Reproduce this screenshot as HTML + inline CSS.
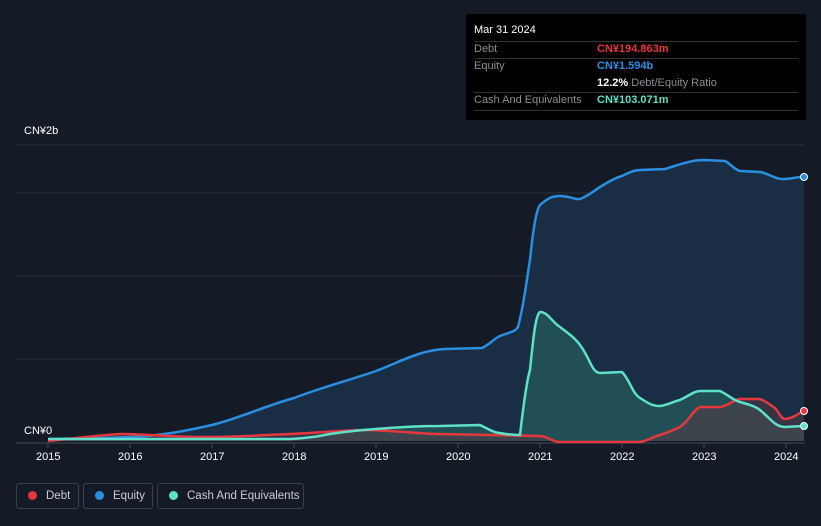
<!DOCTYPE html><html><head><style>
body{margin:0;background:#151b26;width:821px;height:526px;overflow:hidden;font-family:"Liberation Sans",sans-serif;position:relative}
.tt{position:absolute;left:466px;top:14px;width:340px;height:106px;background:#000;color:#fff;font-size:11px}
.r{position:absolute;left:8px;right:8px;border-top:1px solid #333}
.l{position:absolute;left:8px;color:#8a8f96}.v{position:absolute;left:131px;font-weight:bold}
.ax{position:absolute;color:#fff;font-size:11px}
.lg{position:absolute;top:483px;height:26px;border:1px solid #3a404a;border-radius:3px;color:#c8ccd2;font-size:11.5px;line-height:24px;box-sizing:border-box;white-space:nowrap}
.lg i{display:inline-block;width:9px;height:9px;border-radius:50%;margin:0 9px 0 11px;vertical-align:-1px}
</style></head><body>
<div class="tt">
<div style="position:absolute;left:8px;top:10px">Mar 31 2024</div>
<div class="r" style="top:27px"></div>
<div class="l" style="top:29px">Debt</div><div class="v" style="top:29px;color:#e5383e">CN¥194.863m</div>
<div class="r" style="top:44px"></div>
<div class="l" style="top:46px">Equity</div><div class="v" style="top:46px;color:#2a8fe0">CN¥1.594b</div>
<div class="v" style="top:63px">12.2% <span style="color:#8a8f96;font-weight:normal">Debt/Equity Ratio</span></div>
<div class="r" style="top:78px"></div>
<div class="l" style="top:80px">Cash And Equivalents</div><div class="v" style="top:80px;color:#5fe0c8">CN¥103.071m</div>
<div class="r" style="top:96px"></div>
</div>
<svg width="821" height="526" style="position:absolute;left:0;top:0">
<g stroke="#262d39" stroke-width="1"><line x1="16" y1="145" x2="805" y2="145"/><line x1="16" y1="193" x2="805" y2="193"/><line x1="16" y1="276" x2="805" y2="276"/><line x1="16" y1="359" x2="805" y2="359"/></g>
<line x1="16" y1="443" x2="805" y2="443" stroke="#444b56"/>
<path d="M48,439 C90,438 110,438 130,437 C160,436 185,431 212,425 C240,418 265,406 294,398 C320,388 350,380 376,371 C400,362 420,350 445,349 L482,348 C490,344 495,338 500,336 C510,332 515,332 518,327 C525,300 528,270 530,260 C533,230 536,210 540,205 C548,198 552,196 560,196 C570,196 575,200 580,199 C590,195 595,190 600,187 C610,181 615,178 622,176 C630,172 635,170 640,170 L665,169 C675,166 680,164 685,163 C695,160 700,160 705,160 L725,161 C732,165 735,170 740,171 L760,172 C770,174 775,179 782,179 C792,179 795,177 804,177 L804,441 L48,441Z" fill="#1b3550" fill-opacity=".75"/>
<path d="M48,439 L290,439 C310,438 320,436 330,434 C350,431 360,430 376,429 C400,427 420,426 440,426 L480,425 C490,430 495,433 500,433 C510,435 515,435 520,435 C524,400 527,380 530,370 C534,330 536,315 540,312 C548,312 552,322 560,327 C568,333 575,338 580,345 C590,358 592,373 600,373 L622,372 C630,380 632,393 640,398 C648,403 652,406 660,406 C668,405 672,402 680,400 C690,395 695,391 700,391 L720,391 C730,396 733,400 740,402 C750,405 755,406 760,410 C770,418 775,427 785,427 L804,426 L804,441 L48,441Z" fill="#2a6a62" fill-opacity=".55"/>
<path d="M48,441 C80,438 100,435 120,434 C150,434 170,437 200,437 C240,437 260,435 290,434 C320,433 340,430 370,430 C400,431 420,434 440,434 L540,436 C550,437 552,442 560,442 L640,442 C650,440 652,437 660,435 C670,432 673,430 680,427 C690,420 693,410 700,407 L720,407 C730,405 733,400 740,399 L760,399 C768,402 770,405 775,408 C779,412 781,419 785,419 C795,418 798,413 804,411 L804,441 L48,441Z" fill="#5a3a44" fill-opacity=".5"/>
<path d="M48,439 C90,438 110,438 130,437 C160,436 185,431 212,425 C240,418 265,406 294,398 C320,388 350,380 376,371 C400,362 420,350 445,349 L482,348 C490,344 495,338 500,336 C510,332 515,332 518,327 C525,300 528,270 530,260 C533,230 536,210 540,205 C548,198 552,196 560,196 C570,196 575,200 580,199 C590,195 595,190 600,187 C610,181 615,178 622,176 C630,172 635,170 640,170 L665,169 C675,166 680,164 685,163 C695,160 700,160 705,160 L725,161 C732,165 735,170 740,171 L760,172 C770,174 775,179 782,179 C792,179 795,177 804,177" fill="none" stroke="#2a8fe0" stroke-width="2.5"/>
<path d="M48,441 C80,438 100,435 120,434 C150,434 170,437 200,437 C240,437 260,435 290,434 C320,433 340,430 370,430 C400,431 420,434 440,434 L540,436 C550,437 552,442 560,442 L640,442 C650,440 652,437 660,435 C670,432 673,430 680,427 C690,420 693,410 700,407 L720,407 C730,405 733,400 740,399 L760,399 C768,402 770,405 775,408 C779,412 781,419 785,419 C795,418 798,413 804,411" fill="none" stroke="#e5383e" stroke-width="2.5"/>
<path d="M48,439 L290,439 C310,438 320,436 330,434 C350,431 360,430 376,429 C400,427 420,426 440,426 L480,425 C490,430 495,433 500,433 C510,435 515,435 520,435 C524,400 527,380 530,370 C534,330 536,315 540,312 C548,312 552,322 560,327 C568,333 575,338 580,345 C590,358 592,373 600,373 L622,372 C630,380 632,393 640,398 C648,403 652,406 660,406 C668,405 672,402 680,400 C690,395 695,391 700,391 L720,391 C730,396 733,400 740,402 C750,405 755,406 760,410 C770,418 775,427 785,427 L804,426" fill="none" stroke="#5fe0c8" stroke-width="2.5"/>
<circle cx="804" cy="177" r="3.5" fill="#2a8fe0" stroke="#fff"/><circle cx="804" cy="411" r="3.5" fill="#e5383e" stroke="#fff"/><circle cx="804" cy="426" r="3.5" fill="#5fe0c8" stroke="#fff"/>
<g stroke="#444b56"><line x1="48" y1="443" x2="48" y2="448"/><line x1="130" y1="443" x2="130" y2="448"/><line x1="212" y1="443" x2="212" y2="448"/><line x1="294" y1="443" x2="294" y2="448"/><line x1="376" y1="443" x2="376" y2="448"/><line x1="458" y1="443" x2="458" y2="448"/><line x1="540" y1="443" x2="540" y2="448"/><line x1="622" y1="443" x2="622" y2="448"/><line x1="704" y1="443" x2="704" y2="448"/><line x1="786" y1="443" x2="786" y2="448"/></g>
</svg>
<div class="ax" style="left:24px;top:125px">CN¥2b</div>
<div class="ax" style="left:24px;top:425px">CN¥0</div>
<div class="ax" style="left:36px;top:451px">2015</div><div class="ax" style="left:118px;top:451px">2016</div><div class="ax" style="left:200px;top:451px">2017</div><div class="ax" style="left:282px;top:451px">2018</div><div class="ax" style="left:364px;top:451px">2019</div><div class="ax" style="left:446px;top:451px">2020</div><div class="ax" style="left:528px;top:451px">2021</div><div class="ax" style="left:610px;top:451px">2022</div><div class="ax" style="left:692px;top:451px">2023</div><div class="ax" style="left:774px;top:451px">2024</div>
<div class="lg" style="left:16px;width:63px"><i style="background:#e5383e"></i>Debt</div>
<div class="lg" style="left:83px;width:70px"><i style="background:#2a8fe0"></i>Equity</div>
<div class="lg" style="left:157px;width:147px"><i style="background:#5fe0c8"></i>Cash And Equivalents</div>
</body></html>
